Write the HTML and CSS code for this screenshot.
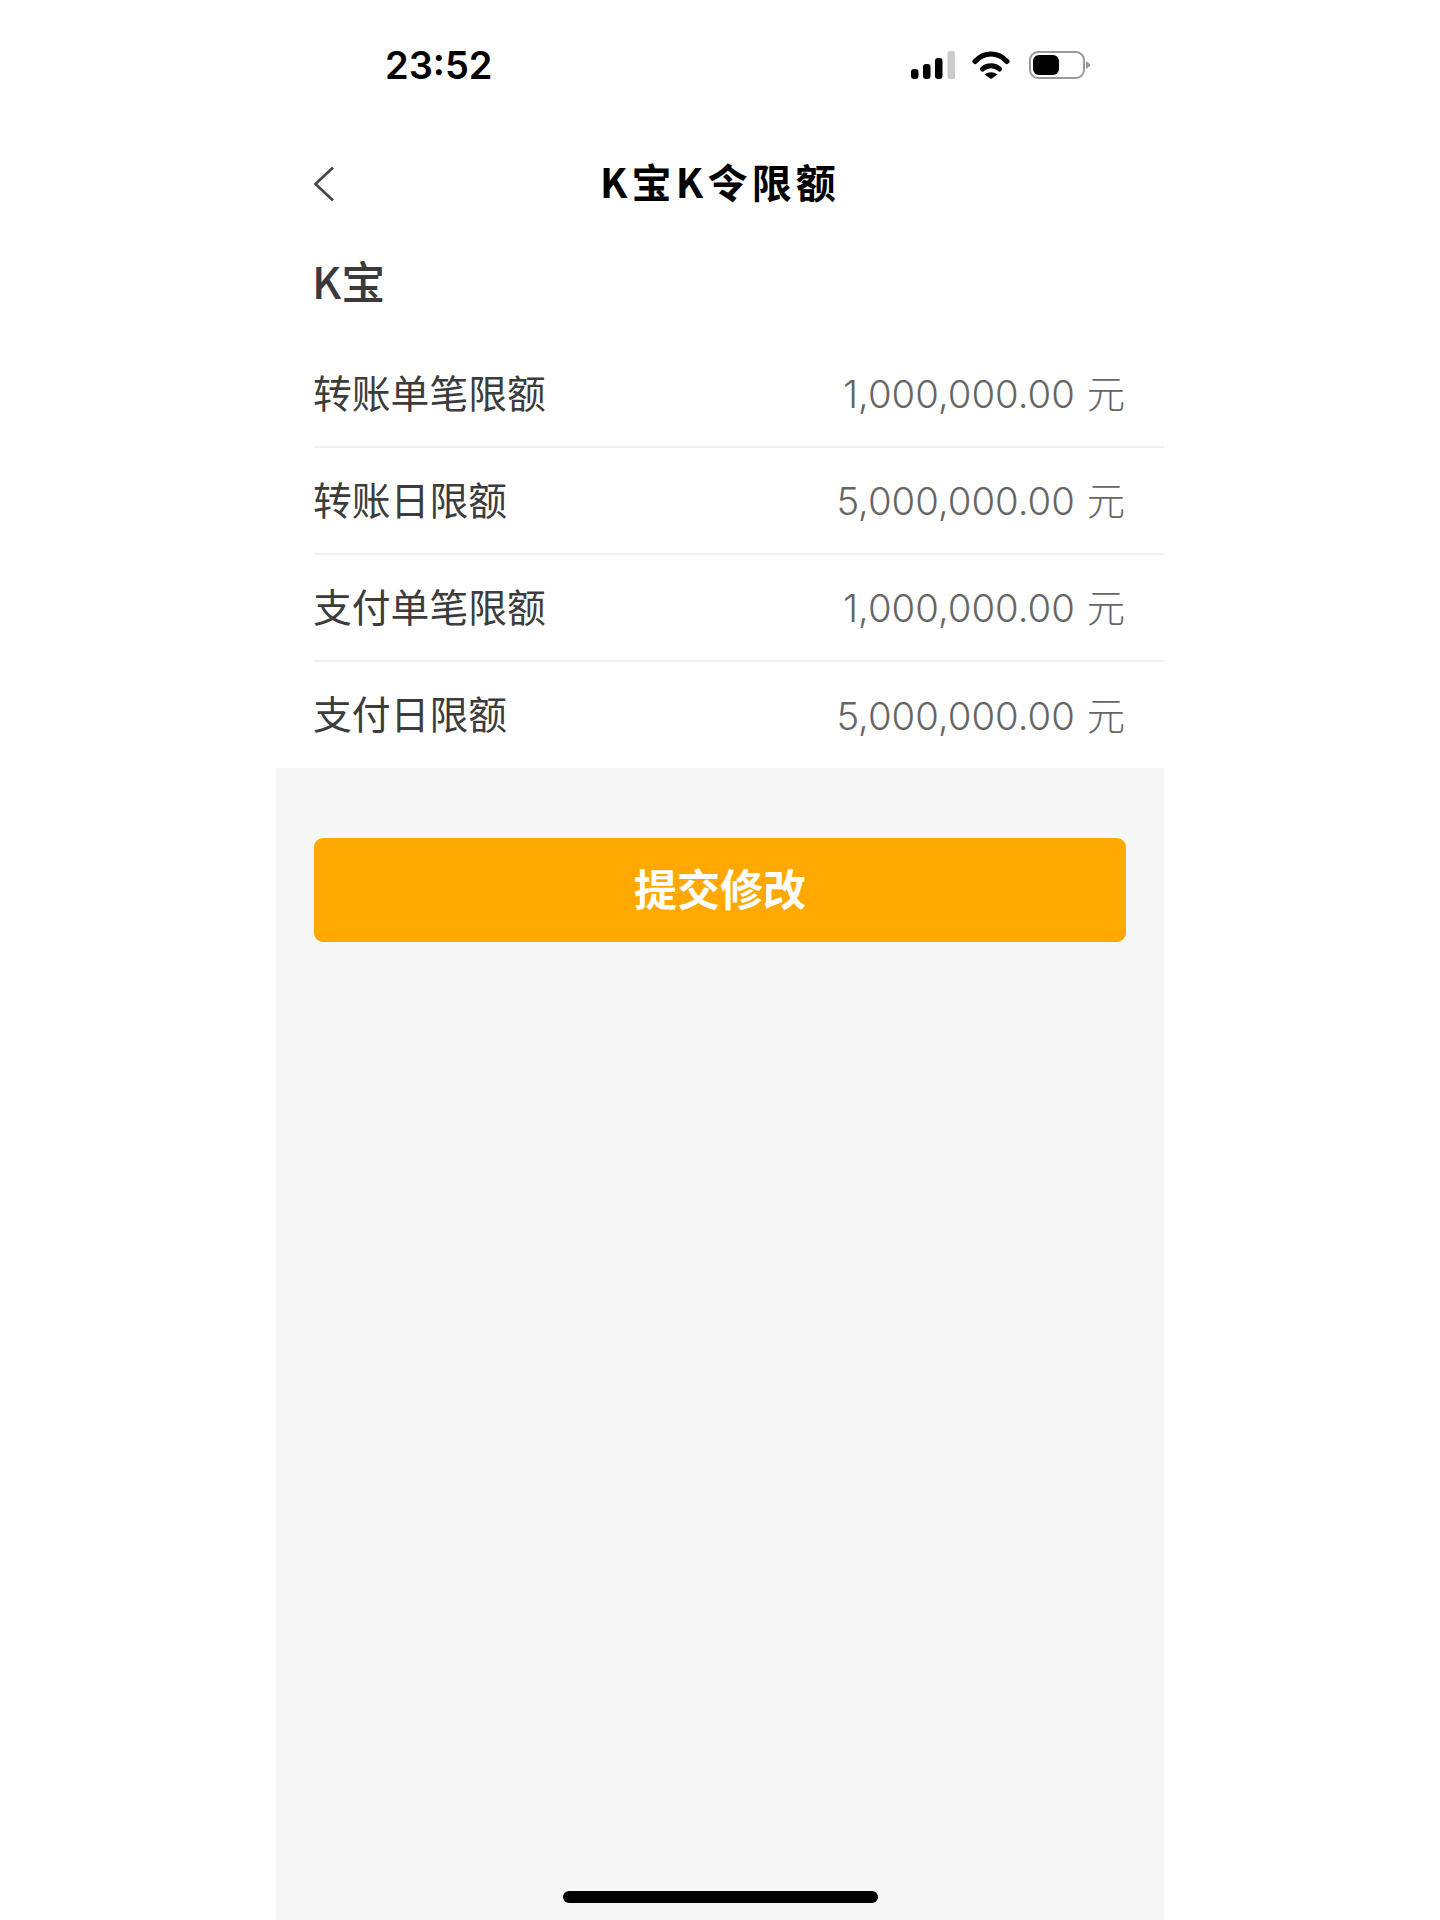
FILE: index.html
```html
<!DOCTYPE html>
<html lang="zh-CN">
<head>
    <meta charset="UTF-8">
    <meta name="viewport" content="width=device-width, initial-scale=1.0">
    <title>K宝K令限额</title>
    <link rel="stylesheet" href="styles.css">
</head>
<body>
    <div class="phone">
        <div class="status-bar">
            <span class="time">23:52</span>
            <div class="status-icons">
                <svg class="icon-signal" width="44" height="28" viewBox="0 0 44 28">
                    <rect x="0" y="18" width="7.5" height="10" rx="3" fill="#000"/>
                    <rect x="12" y="13" width="7.5" height="15" rx="3" fill="#000"/>
                    <rect x="24" y="7" width="7.5" height="21" rx="3" fill="#000"/>
                    <rect x="36.5" y="0" width="7.5" height="28" rx="2.5" fill="#ccc"/>
                </svg>
                <svg class="icon-wifi" width="38" height="28" viewBox="0 0 38 28">
                    <path d="M3 10.5C12 0.5 26 0.5 35 10.5" fill="none" stroke="#000" stroke-width="5" stroke-linecap="round"/>
                    <path d="M10.5 18C15 13.5 23 13.5 27.5 18" fill="none" stroke="#000" stroke-width="5" stroke-linecap="round"/>
                    <path d="M12.5 23.5C16.5 20.5 21.5 20.5 25.5 23.5L19 28Z" fill="#000"/>
                </svg>
                <svg class="icon-battery" width="61" height="28" viewBox="0 0 61 28">
                    <rect x="1" y="1" width="54" height="26" rx="8" fill="#fff" stroke="#999" stroke-width="2"/>
                    <rect x="4" y="4" width="26" height="20" rx="6" fill="#000"/>
                    <path d="M57 10L61 13V15L57 18Z" fill="#999"/>
                </svg>
            </div>
        </div>

        <header class="nav-bar">
            <svg class="icon-back" width="22" height="36" viewBox="0 0 22 36">
                <path d="M20 1.5L2.5 18L20 34.5" fill="none" stroke="#444" stroke-width="2.6"/>
            </svg>
            <h1>K宝K令限额</h1>
        </header>

        <h2 class="section-title">K宝</h2>

        <section class="limits">
            <div class="limit-row">
                <span class="limit-name">转账单笔限额</span>
                <span class="limit-value">1,000,000.00 元</span>
            </div>
            <div class="limit-row">
                <span class="limit-name">转账日限额</span>
                <span class="limit-value">5,000,000.00 元</span>
            </div>
            <div class="limit-row">
                <span class="limit-name">支付单笔限额</span>
                <span class="limit-value">1,000,000.00 元</span>
            </div>
            <div class="limit-row">
                <span class="limit-name">支付日限额</span>
                <span class="limit-value">5,000,000.00 元</span>
            </div>
        </section>

        <div class="footer-area">
            <button class="submit-button">提交修改</button>
            <div class="home-indicator"></div>
        </div>
    </div>
</body>
</html>
```

FILE: styles.css
```css
body {
    margin: 0;
    background: #fff;
    font-family: "Noto Sans CJK SC", sans-serif;
}
.phone {
    width: 888px;
    height: 1920px;
    margin: 0 auto;
    display: flex;
    flex-direction: column;
}
.status-bar {
    height: 130px;
    padding: 0 74px 0 109px;
    display: flex;
    justify-content: space-between;
    align-items: center;
}
.time {
    font-family: Inter, sans-serif;
    font-size: 38px;
    font-weight: 600;
    color: #000;
}
.status-icons {
    display: flex;
    align-items: center;
    gap: 17px;
}
.status-icons svg {
    display: block;
}
.icon-wifi {
    margin-right: 2px;
}
.nav-bar {
    height: 108px;
    padding: 0 37px;
    display: grid;
    grid-template-columns: 1fr auto 1fr;
    align-items: center;
}
.nav-bar h1 {
    margin: 0 0 7px;
    font-size: 40px;
    font-weight: 600;
    letter-spacing: 4.2px;
    color: #000;
}
.section-title {
    height: 103px;
    margin: 0;
    padding: 0 0 20px 36px;
    box-sizing: border-box;
    display: flex;
    align-items: center;
    font-size: 44px;
    font-weight: 500;
    color: #3a3a3a;
}
.limit-row {
    height: 107px;
    margin-left: 38px;
    padding: 0 39px 6px 0;
    box-sizing: border-box;
    display: flex;
    justify-content: space-between;
    align-items: center;
    border-bottom: 2px solid #f0f0f0;
}
.limit-row:last-child {
    height: 106px;
    border-bottom: none;
}
.limit-name {
    margin-left: -1px;
    font-size: 38.8px;
    color: #3c3c3c;
}
.limit-value {
    margin-top: 2px;
    font-family: Inter, "Noto Sans CJK SC", sans-serif;
    font-size: 38.3px;
    font-weight: 300;
    word-spacing: 1px;
    color: #666;
}
.footer-area {
    flex: 1;
    padding: 70px 38px 17px;
    background: #f7f7f7;
    display: flex;
    flex-direction: column;
}
.submit-button {
    height: 104px;
    padding: 0 0 7px;
    border: none;
    border-radius: 9px;
    background: #ffa800;
    font-family: "Noto Sans CJK SC", sans-serif;
    font-size: 43px;
    font-weight: 600;
    color: #fff;
}
.home-indicator {
    width: 315px;
    height: 12px;
    margin: auto auto 0;
    border-radius: 6px;
    background: #000;
}
```
